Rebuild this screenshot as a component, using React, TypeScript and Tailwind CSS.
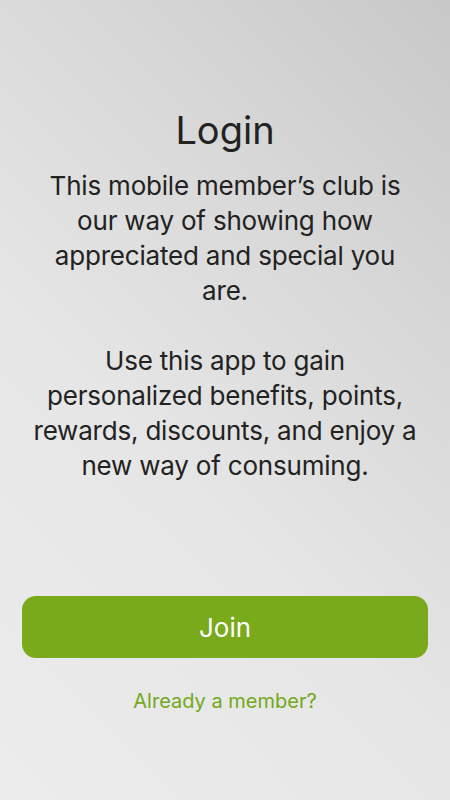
import React from 'react';

const App: React.FC = () => {
  return (
    <div
      className="w-[450px] h-[800px] flex flex-col items-center bg-[linear-gradient(225deg,#c8c8c8_0%,#d8d8d8_30%,#e6e6e6_60%,#ececec_100%)] text-[#222222]"
      style={{ fontFamily: 'Inter, "Liberation Sans", sans-serif' }}
    >
      {/* Intro copy */}
      <div className="pt-[106px] w-[390px] text-center">
        <h1 className="text-[38px] leading-[48px] font-normal">Login</h1>
        <p className="mt-[14px] text-[26px] leading-[35px] tracking-[-0.2px]">
          This mobile member’s club is our way of showing how appreciated and special you are.
        </p>
        <p className="mt-[35px] text-[26px] leading-[35px] tracking-[-0.2px]">
          Use this app to gain personalized benefits, points, rewards, discounts, and enjoy a new way of consuming.
        </p>
      </div>

      {/* Actions */}
      <div className="mt-auto mb-[84px] w-full px-[22px] flex flex-col items-center">
        <button className="w-full h-[62px] rounded-[14px] bg-[#79aa1b] text-white text-[26px]">
          Join
        </button>
        <button className="mt-[28px] text-[20px] text-[#72a81a]">Already a member?</button>
      </div>
    </div>
  );
};

export default App;
